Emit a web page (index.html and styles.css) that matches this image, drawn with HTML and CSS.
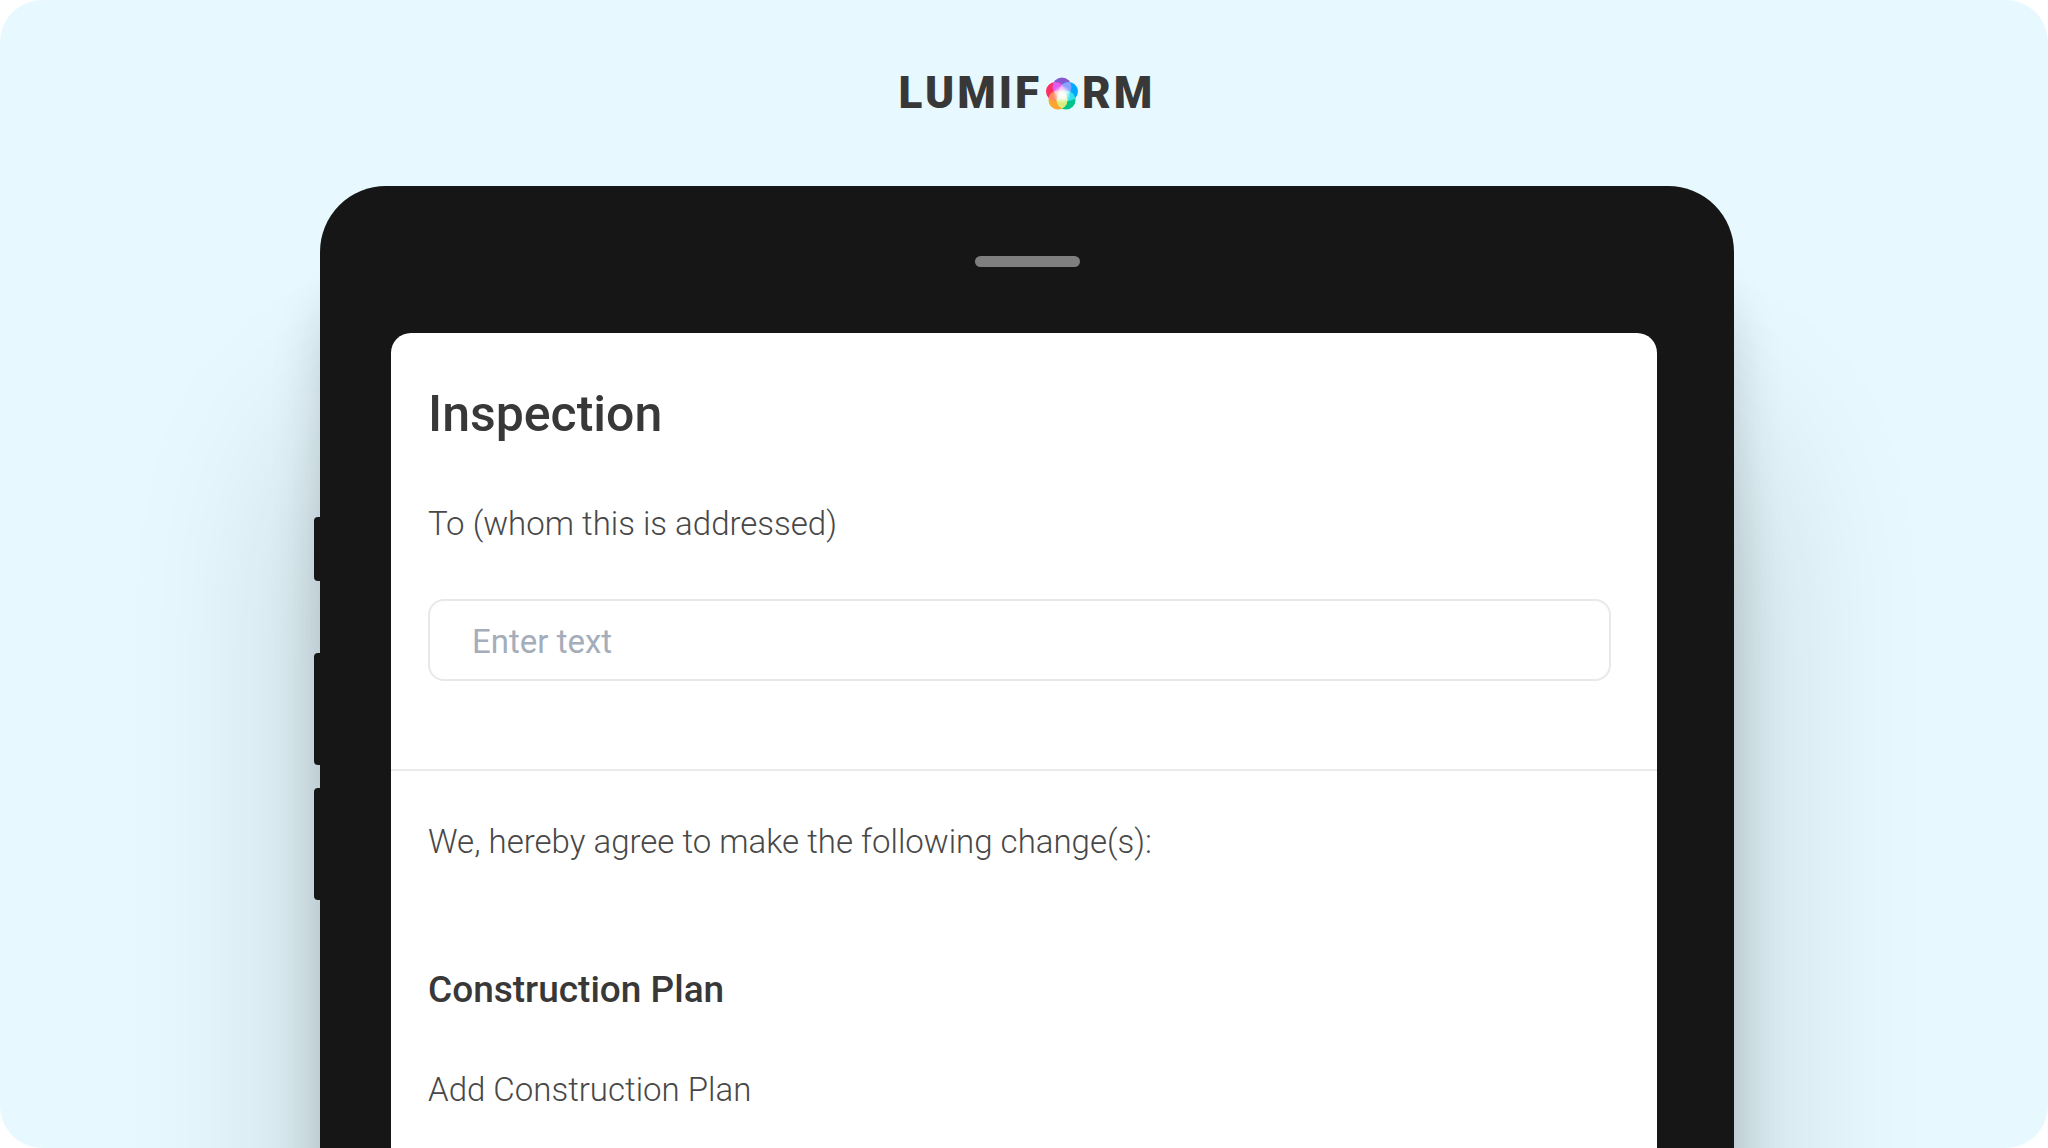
FILE: index.html
```html
<!DOCTYPE html>
<html lang="en">
<head>
<meta charset="utf-8">
<meta name="viewport" content="width=device-width, initial-scale=1">
<title>Lumiform – Inspection</title>
<link rel="stylesheet" href="styles.css">
</head>
<body>
<div class="scene">
  <header class="brand">
    <span class="brand-text">LUMIF</span>
    <svg class="brand-mark" viewBox="0 0 32 33" role="img" aria-label="O">
      <defs>
        <clipPath id="top"><circle cx="16" cy="10" r="9.500"/></clipPath>
        <clipPath id="right"><circle cx="22.500" cy="14.500" r="9.500"/></clipPath>
        <clipPath id="left"><circle cx="9.500" cy="14.500" r="9.500"/></clipPath>
        <clipPath id="low"><circle cx="20" cy="23" r="9.500"/></clipPath>
        <radialGradient id="glow">
          <stop offset="0" stop-color="#fff"/>
          <stop offset=".4" stop-color="#fff" stop-opacity=".8"/>
          <stop offset="1" stop-color="#fff" stop-opacity="0"/>
        </radialGradient>
      </defs>
      <circle cx="16" cy="10" r="9.500" fill="#8558d0"/>
      <circle cx="22.500" cy="14.500" r="9.500" fill="#00a8ff"/>
      <circle cx="9.500" cy="14.500" r="9.500" fill="#fb2f63"/>
      <circle cx="20" cy="23" r="9.500" fill="#00c48a"/>
      <circle cx="12" cy="23" r="9.500" fill="#ffa42e"/>
      <circle cx="22.500" cy="14.500" r="9.500" fill="#86a4ff" clip-path="url(#top)"/>
      <circle cx="9.500" cy="14.500" r="9.500" fill="#de5cf2" clip-path="url(#top)"/>
      <circle cx="20" cy="23" r="9.500" fill="#35dfee" clip-path="url(#right)"/>
      <circle cx="12" cy="23" r="9.500" fill="#ff8a62" clip-path="url(#left)"/>
      <circle cx="12" cy="23" r="9.500" fill="#d5ed80" clip-path="url(#low)"/>
      <g opacity=".5">
        <g clip-path="url(#top)">
          <circle cx="12" cy="23" r="9.500" fill="#ffd9ec"/>
          <circle cx="20" cy="23" r="9.500" fill="#d9f2ff"/>
        </g>
        <g clip-path="url(#left)">
          <circle cx="22.500" cy="14.500" r="9.500" fill="#f6d8ff"/>
          <circle cx="20" cy="23" r="9.500" fill="#fff0d8"/>
        </g>
        <circle cx="12" cy="23" r="9.500" fill="#f2fbe6" clip-path="url(#right)"/>
      </g>
      <circle cx="16" cy="17.500" r="9" fill="url(#glow)"/>
    </svg>
    <span class="brand-text">RM</span>
  </header>

  <div class="device">
    <div class="side-keys">
      <span class="key key-short"></span>
      <span class="key key-up"></span>
      <span class="key key-down"></span>
    </div>
    <div class="speaker-row"><span class="speaker"></span></div>

    <main class="screen">
      <section class="block block-intro">
        <h1 class="title">Inspection</h1>
        <label class="text" for="addressee">To (whom this is addressed)</label>
        <input class="field" id="addressee" type="text" placeholder="Enter text">
      </section>
      <section class="block block-plan">
        <p class="text">We, hereby agree to make the following change(s):</p>
        <h2 class="subtitle">Construction Plan</h2>
        <p class="text">Add Construction Plan</p>
      </section>
    </main>
  </div>
</div>
</body>
</html>
```
FILE: styles.css
```css
* { box-sizing: border-box; }

body {
  margin: 0;
  background: #fff;
  color: #484848;
  font-family: Roboto, "Liberation Sans", sans-serif;
}

.scene {
  display: flex;
  flex-direction: column;
  height: 100vh;
  padding: 0 314px 0 320px;
  overflow: hidden;
  border-radius: 42px;
  background: #e7f9ff;
}

.brand {
  display: flex;
  flex: none;
  align-items: center;
  justify-content: center;
  gap: 4px;
  height: 186px;
}

.brand-text {
  color: #383838;
  font-size: 44px;
  font-weight: 900;
  line-height: 48px;
  letter-spacing: 3px;
}

.brand-mark { width: 32px; height: 33px; }

.device {
  position: relative;
  flex: none;
  min-height: 100vh;
  padding: 0 77px 0 71px;
  border-radius: 66px 66px 0 0;
  background: #161616;
  box-shadow:
    0 250px 190px rgba(0, 0, 0, .2),
    0 100px 50px rgba(0, 0, 0, .16);
}

.side-keys {
  position: absolute;
  top: 331px;
  left: -6px;
  display: flex;
  flex-direction: column;
  width: 12px;
}

.key { border-radius: 4px; background: #161616; }
.key-short { height: 64px; }
.key-up { height: 112px; margin-top: 72px; }
.key-down { height: 112px; margin-top: 23px; }

.speaker-row {
  display: flex;
  align-items: center;
  justify-content: center;
  height: 147px;
  padding: 4px 0 0 6px;
}

.speaker {
  width: 105px;
  height: 11px;
  border-radius: 6px;
  background: #7f7f7f;
}

.screen {
  min-height: 100vh;
  border-radius: 20px 20px 0 0;
  background: #fff;
}

.block {
  display: flex;
  flex-direction: column;
  padding: 0 46px 0 37px;
}

.block-intro {
  padding-top: 49px;
  padding-bottom: 88px;
  border-bottom: 2px solid #ebebeb;
}

.block-plan { padding-top: 51px; }

.title,
.subtitle,
.text { margin: 0; }

.title {
  margin-bottom: 58px;
  color: #383838;
  font-size: 50px;
  font-weight: 500;
  line-height: 64px;
}

.text {
  font-size: 33px;
  font-weight: 300;
  line-height: 40px;
}

.subtitle {
  margin: 104px 0 56px;
  color: #383838;
  font-size: 37px;
  font-weight: 500;
  line-height: 48px;
}

.field {
  width: 100%;
  height: 82px;
  margin-top: 55px;
  padding: 2px 42px 0;
  border: 2px solid #e8e8e8;
  border-radius: 16px;
  background: #fff;
  color: #484848;
  font: 400 33px/40px Roboto, "Liberation Sans", sans-serif;
}

.field::placeholder { color: #a5adba; opacity: 1; }
```
